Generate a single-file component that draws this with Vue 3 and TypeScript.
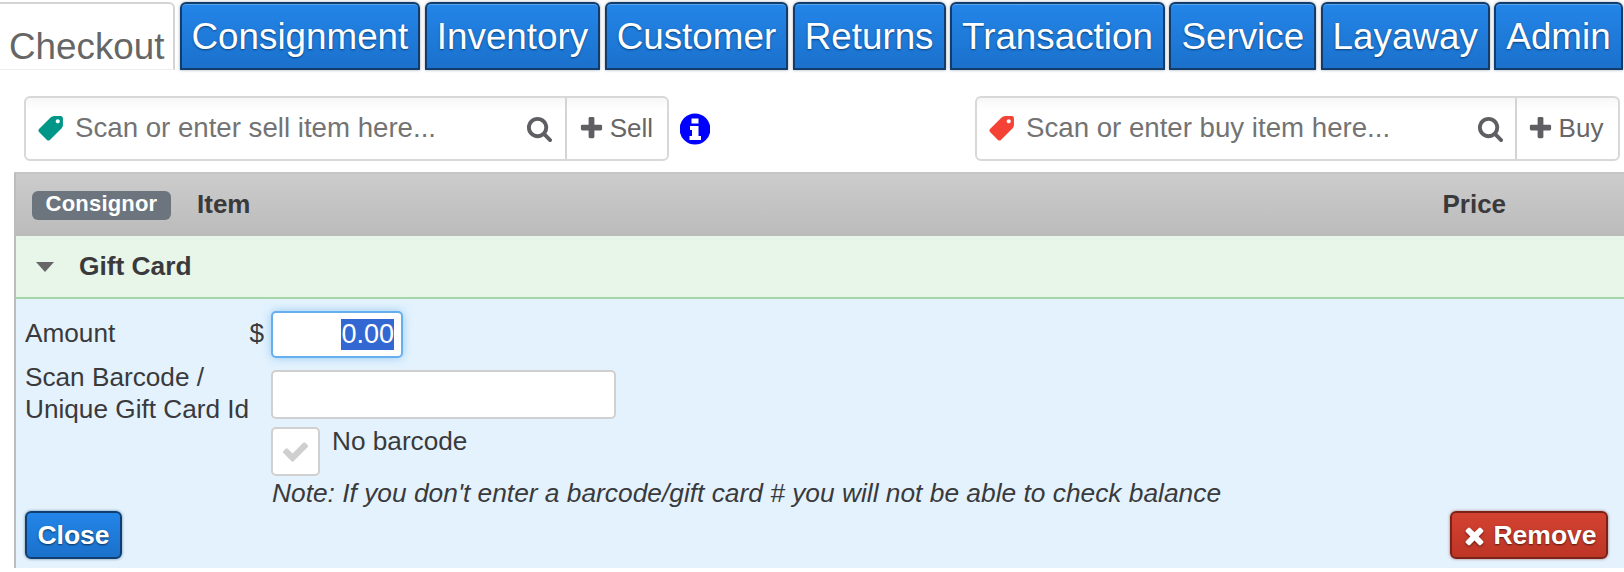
<script setup lang="ts">
import { onMounted, ref } from 'vue'

const tabs: string[] = ['Consignment', 'Inventory', 'Customer', 'Returns', 'Transaction', 'Service', 'Layaway', 'Admin']
const amount = ref<HTMLInputElement | null>(null)
onMounted(() => {
  amount.value?.focus()
  amount.value?.select()
})
const searchPath = 'M1216 832q0-185-131.500-316.500t-316.500-131.500-316.500 131.500-131.500 316.500 131.500 316.500 316.500 131.500 316.500-131.500 131.500-316.500zm512 832q0 52-38 90t-90 38q-54 0-90-38l-343-342q-179 124-399 124-143 0-273.500-55.500t-225-150-150-225-55.500-273.500 55.500-273.500 150-225 225-150 273.500-55.500 273.500 55.500 225 150 150 225 55.500 273.500q0 220-124 399l343 343q37 37 37 90z'
const plusPath = 'M1600 736v192q0 40-28 68t-68 28h-416v416q0 40-28 68t-68 28h-192q-40 0-68-28t-28-68v-416h-416q-40 0-68-28t-28-68v-192q0-40 28-68t68-28h416v-416q0-40 28-68t68-28h192q40 0 68 28t28 68v416h416q40 0 68 28t28 68z'
const tagPath = 'M576 448q0-53-37.500-90.500t-90.500-37.500-90.500 37.500-37.500 90.500 37.500 90.500 90.500 37.500 90.500-37.500 37.500-90.500zm1067 576q0 53-37 90l-491 492q-39 37-91 37-53 0-90-37l-715-716q-38-37-64.500-101t-26.500-117v-416q0-52 38-90t90-38h416q53 0 117 26.500t102 64.500l715 714q37 39 37 91z'
const checkPath = 'M1671 566q0 40-28 68l-724 724-136 136q-28 28-68 28t-68-28l-136-136-362-362q-28-28-28-68t28-68l136-136q28-28 68-28t68 28l294 295 656-657q28-28 68-28t68 28l136 136q28 28 28 68z'
const timesPath = 'M1490 1322q0 40-28 68l-136 136q-28 28-68 28t-68-28l-294-294-294 294q-28 28-68 28t-68-28l-136-136q-28-28-28-68t28-68l294-294-294-294q-28-28-28-68t28-68l136-136q28-28 68-28t68 28l294 294 294-294q28-28 68-28t68 28l136 136q28 28 28 68t-28 68l-294 294 294 294q28 28 28 68z'
</script>

<template>
  <div class="page">
    <nav class="tabs">
      <a class="tab active">Checkout</a>
      <a v-for="t in tabs" :key="t" class="tab">{{ t }}</a>
    </nav>

    <div class="searches">
      <div class="search-group">
        <div class="search sell">
          <svg class="tag" viewBox="0 0 1792 1792"><path fill="#009688" fill-rule="evenodd" transform="translate(1792 0) scale(-1 1)" :d="tagPath" /></svg>
          <span class="placeholder">Scan or enter sell item here...</span>
          <svg class="mag" viewBox="0 0 1792 1792"><path fill="#5f5f63" :d="searchPath" /></svg>
          <span class="action"><svg class="plus" viewBox="0 0 1792 1792"><path fill="#5f5f63" :d="plusPath" /></svg>Sell</span>
        </div>
        <svg class="info" viewBox="0 0 30 32" aria-label="info">
          <circle cx="15" cy="16" r="15.4" fill="#0000ff" />
          <rect x="11.500" y="5.500" width="7" height="5" fill="#fff" />
          <path fill="#fff" d="M10 13h8.500v10H21v4H9.500v-4H12v-6h-2z" />
        </svg>
      </div>
      <div class="search buy">
        <svg class="tag" viewBox="0 0 1792 1792"><path fill="#f44336" fill-rule="evenodd" transform="translate(1792 0) scale(-1 1)" :d="tagPath" /></svg>
        <span class="placeholder">Scan or enter buy item here...</span>
        <svg class="mag" viewBox="0 0 1792 1792"><path fill="#5f5f63" :d="searchPath" /></svg>
        <span class="action"><svg class="plus" viewBox="0 0 1792 1792"><path fill="#5f5f63" :d="plusPath" /></svg>Buy</span>
      </div>
    </div>

    <section class="table">
      <header class="head">
        <span class="badge">Consignor</span>
        <span class="col-item">Item</span>
        <span class="col-price">Price</span>
      </header>
      <div class="row-title">
        <span class="caret"></span>
        <span class="title">Gift Card</span>
      </div>
      <div class="detail">
        <div class="form">
          <label class="lbl amount-lbl">Amount<span class="dollar">$</span></label>
          <div><input ref="amount" class="field amount" value="0.00" /></div>
          <label class="lbl barcode-lbl">Scan Barcode /<br />Unique Gift Card Id</label>
          <div class="barcode-col">
            <input class="field barcode" />
            <div class="nobar">
              <span class="check"><svg viewBox="0 0 1792 1792"><path fill="#cfcfcf" :d="checkPath" /></svg></span>
              <span class="nobar-text">No barcode</span>
            </div>
            <div class="note">Note: If you don't enter a barcode/gift card # you will not be able to check balance</div>
          </div>
        </div>
        <div class="buttons">
          <button class="btn blue">Close</button>
          <button class="btn red"><svg viewBox="0 0 1792 1792"><path fill="#fff" :d="timesPath" /></svg>Remove</button>
        </div>
      </div>
    </section>
  </div>
</template>

<style>
html, body { margin: 0; background: #fff; overflow: hidden; }
</style>

<style scoped>
.page {
  width: 1624px;
  height: 572px;
  overflow: hidden;
  font-family: "Liberation Sans", Arial, sans-serif;
  color: #3a3a3c;
}
.tabs {
  display: flex;
  gap: 4.5px;
  padding-top: 2px;
  height: 68px;
}
.tab {
  box-sizing: border-box;
  flex: none;
  height: 68px;
  padding: 0 10px;
  border: 2px solid #123d6b;
  border-radius: 6px 6px 0 0;
  background: linear-gradient(#2385e8, #1b71cc);
  color: #fff;
  font-size: 36.8px;
  line-height: 65px;
  text-shadow: 0 1px 2px #0b3f77;
  box-shadow: 0 0 3px rgba(30, 50, 80, .45), inset 0 1px 0 rgba(255, 255, 255, .25);
  white-space: nowrap;
}
.tab.active {
  width: 175px;
  padding: 10px 0 0 9px;
  border: 2px solid #d4d4d4;
  border-left: 0;
  border-bottom: 1px solid #eee;
  background: #fff;
  color: #666;
  text-shadow: none;
  box-shadow: none;
  border-radius: 0 6px 0 0;
}
.searches {
  display: flex;
  justify-content: space-between;
  padding: 26px 4px 0 24px;
}
.search-group { display: flex; align-items: center; gap: 11px; }
.search {
  box-sizing: border-box;
  display: flex;
  align-items: center;
  height: 65px;
  border: 2px solid #d8d8d8;
  border-radius: 6px;
  background: linear-gradient(#f7f7f7, #fff 12px);
  font-size: 27.65px;
  color: #737373;
}
.sell { width: 645px; }
.buy { width: 645px; }
.tag { width: 29px; height: 29px; margin-left: 10px; flex: none; }
.placeholder { margin-left: 10px; flex: 1; white-space: nowrap; padding-bottom: 2px; }
.mag { width: 27px; height: 27px; flex: none; margin-right: 11px; }
.sell .mag { margin-right: 12px; }
.action {
  box-sizing: border-box;
  height: 100%;
  display: flex;
  align-items: center;
  gap: 5px;
  padding: 0 14px 0 11px;
  border-left: 2px solid #d4d4d4;
  font-size: 26px;
  color: #666;
}
.buy .action { gap: 5px; padding: 0 14.6px 0 9.4px; }
.plus { width: 27px; height: 27px; }
.info { width: 30px; height: 32px; display: block; }
.table {
  box-sizing: border-box;
  margin: 11px 0 0 14px;
  height: 396px;
  border-top: 2px solid #c6c6c6;
  border-left: 2px solid #bdbdbd;
  background: #f2f2f2;
}
.head {
  display: flex;
  align-items: center;
  height: 62px;
  background: linear-gradient(#cccccc, #bbbbbb);
}
.badge {
  margin-left: 16px;
  width: 139px;
  height: 29px;
  box-sizing: border-box;
  text-align: center;
  background: #6c757d;
  color: #fff;
  border-radius: 6px;
  font-weight: bold;
  font-size: 22px;
  letter-spacing: .2px;
  line-height: 26px;
}
.col-item { margin: 0 0 2px 26px; font-weight: bold; font-size: 26px; }
.col-price { margin: 0 0 2px 1192px; font-weight: bold; font-size: 26px; }
.row-title {
  box-sizing: border-box;
  display: flex;
  align-items: center;
  height: 63px;
  background: #e8f5e9;
  border-bottom: 2px solid #a5d6a7;
}
.caret {
  margin-left: 20px;
  width: 0;
  height: 0;
  border-left: 9.5px solid transparent;
  border-right: 9.5px solid transparent;
  border-top: 10px solid #666;
}
.title { margin-left: 25px; font-weight: bold; font-size: 26.3px; }
.detail {
  position: relative;
  box-sizing: border-box;
  height: 269px;
  background: #e3f2fd;
  padding: 12px 0 0 9px;
}
.form {
  display: grid;
  grid-template-columns: 246px 1fr;
  row-gap: 12px;
  font-size: 26.2px;
}
.lbl { line-height: 32px; }
.amount-lbl {
  display: flex;
  justify-content: space-between;
  padding-right: 7px;
  padding-top: 6px;
}
.barcode-lbl { margin-top: -9px; }
.field {
  box-sizing: border-box;
  display: block;
  border: 2px solid #d0d0d0;
  border-radius: 5px;
  background: #fff;
  font-family: inherit;
  font-size: 26.2px;
  color: #333;
  outline: none;
}
.amount {
  width: 132px;
  height: 47px;
  text-align: right;
  font-size: 27px;
  padding: 0 7px 0 0;
  border-color: #66afee;
  box-shadow: 0 0 9px rgba(102, 175, 238, .6);
}
.amount::selection { background: #3367d1; color: #fff; }
.barcode { width: 345px; height: 49px; }
.barcode-col { display: flex; flex-direction: column; }
.nobar { display: flex; margin-top: 8px; }
.check {
  box-sizing: border-box;
  width: 49px;
  height: 49px;
  border: 2px solid #d0d0d0;
  border-radius: 5px;
  background: #fff;
  display: flex;
  align-items: center;
  justify-content: center;
}
.check svg { width: 29px; height: 29px; }
.nobar-text { margin: -2px 0 0 12px; line-height: 32px; }
.note { font-style: italic; line-height: 32px; font-size: 26.33px; margin: 1px 0 0 1px; white-space: nowrap; }
.buttons {
  position: absolute;
  left: 9px;
  right: 16px;
  top: 212px;
  display: flex;
  justify-content: space-between;
}
.btn {
  box-sizing: border-box;
  height: 48px;
  display: flex;
  align-items: center;
  border-radius: 6px;
  color: #fff;
  font-family: inherit;
  font-weight: bold;
  font-size: 26.5px;
  text-shadow: 0 1px 2px rgba(0, 0, 0, .6);
  padding: 0;
  justify-content: center;
}
.blue {
  width: 97px;
  border: 2px solid #0f3f70;
  background: linear-gradient(#2385e8, #1b71cc);
  box-shadow: 0 0 3px rgba(15, 63, 112, .6);
}
.red {
  width: 158px;
  border: 2px solid #7a2118;
  background: linear-gradient(#d34231, #bd3526);
  box-shadow: 0 0 3px rgba(122, 33, 24, .6);
  gap: 5px;
}
.red svg { width: 27px; height: 27px; filter: drop-shadow(0 1px 1px rgba(0,0,0,.5)); }
</style>
